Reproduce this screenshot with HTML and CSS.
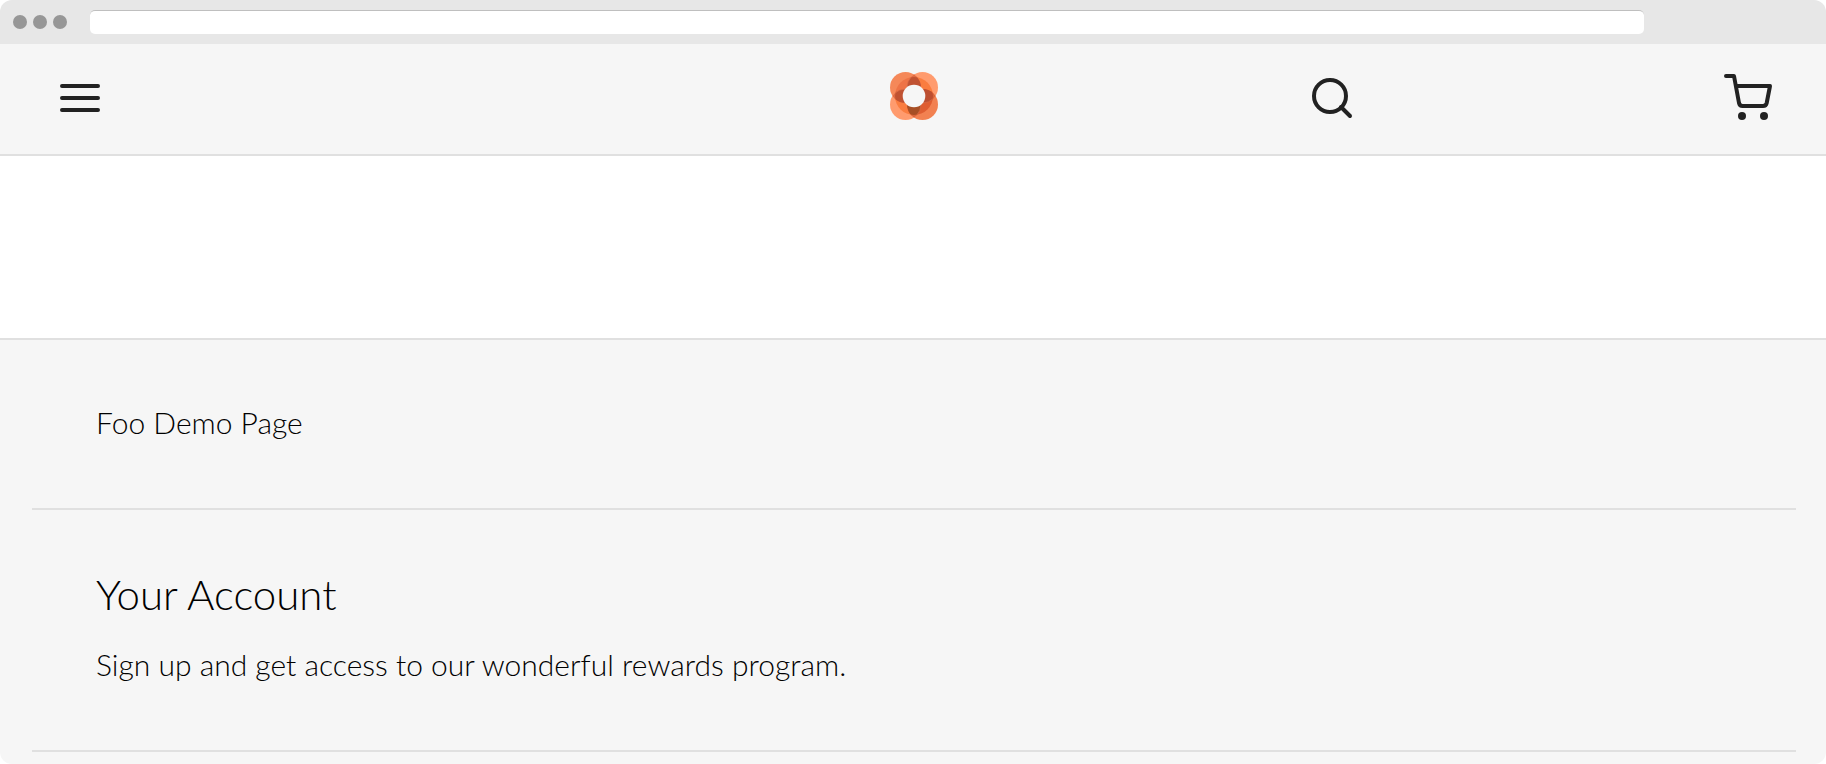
FILE: index.html
```html
<!DOCTYPE html>
<html lang="en">
<head>
<meta charset="utf-8">
<title>Foo Demo Page</title>
<link rel="stylesheet" href="styles.css">
</head>
<body>
<div class="browser">
  <div class="titlebar">
    <div class="dots"><span class="dot"></span><span class="dot"></span><span class="dot"></span></div>
    <input class="address" type="text" aria-label="Address">
  </div>
  <header class="header">
    <button class="icon-button" type="button" aria-label="Menu">
      <svg width="48" height="48" viewBox="0 0 48 48" fill="none" stroke="#222" stroke-width="4" stroke-linecap="round"><path d="M6 14h36M6 26h36M6 38h36"/></svg>
    </button>
    <a class="logo" href="#" aria-label="Home">
      <svg width="48" height="48" viewBox="0 0 48 48">
        <defs>
          <clipPath id="ring"><circle cx="24" cy="24" r="19"/></clipPath>
          <clipPath id="tl"><circle cx="15.5" cy="15.5" r="15.5"/></clipPath>
          <clipPath id="br"><circle cx="32.5" cy="32.5" r="15.5"/></clipPath>
        </defs>
        <circle cx="15.5" cy="15.5" r="15.5" fill="#f58859"/>
        <circle cx="32.5" cy="15.5" r="15.5" fill="#ff9b6e"/>
        <circle cx="15.5" cy="32.5" r="15.5" fill="#ff9b6e"/>
        <circle cx="32.5" cy="32.5" r="15.5" fill="#f28151"/>
        <g clip-path="url(#tl)"><circle cx="32.5" cy="15.5" r="15.5" fill="#df6b43"/><circle cx="15.5" cy="32.5" r="15.5" fill="#df6b43"/></g>
        <g clip-path="url(#br)"><circle cx="32.5" cy="15.5" r="15.5" fill="#d8653b"/><circle cx="15.5" cy="32.5" r="15.5" fill="#d8653b"/></g>
        <g clip-path="url(#ring)">
          <circle cx="15.5" cy="15.5" r="15.5" fill="#ee7346"/>
          <circle cx="32.5" cy="15.5" r="15.5" fill="#fa7d40"/>
          <circle cx="15.5" cy="32.5" r="15.5" fill="#fa7d40"/>
          <circle cx="32.5" cy="32.5" r="15.5" fill="#df5d31"/>
          <g stroke="#dc7450" stroke-width=".6">
            <g clip-path="url(#tl)"><circle cx="32.5" cy="15.5" r="15.5" fill="#c05232"/><circle cx="15.5" cy="32.5" r="15.5" fill="#c05232"/></g>
            <g clip-path="url(#br)"><circle cx="32.5" cy="15.5" r="15.5" fill="#bd4f31"/><circle cx="15.5" cy="32.5" r="15.5" fill="#a74f25"/></g>
          </g>
        </g>
        <circle cx="24" cy="24" r="11.3" fill="#f6f6f6"/>
      </svg>
    </a>
    <div class="actions">
      <button class="icon-button" type="button" aria-label="Search">
        <svg width="48" height="48" viewBox="0 0 48 48" fill="none" stroke="#222" stroke-width="4" stroke-linecap="round"><circle cx="23" cy="24" r="16"/><path d="M34 35l9 9"/></svg>
      </button>
      <button class="icon-button" type="button" aria-label="Cart">
        <svg width="48" height="48" viewBox="0 0 48 48" fill="none" stroke="#222" stroke-width="4" stroke-linecap="round" stroke-linejoin="round"><path d="M2 4h8l5 27q.7 3 3.500 3H39q3 0 3.700-3L46 14H12"/><g fill="#222" stroke="none"><circle cx="18" cy="44" r="4"/><circle cx="40" cy="44" r="4"/></g></svg>
      </button>
    </div>
  </header>
  <main class="content"></main>
  <footer class="footer">
    <section class="block"><p class="text">Foo Demo Page</p></section>
    <section class="block">
      <h2 class="heading">Your Account</h2>
      <p class="text">Sign up and get access to our wonderful rewards program.</p>
    </section>
  </footer>
</div>
</body>
</html>
```
FILE: styles.css
```css
* { box-sizing: border-box; }
body { margin: 0; background: #fff; color: #000; font-family: Lato, "Open Sans", sans-serif; font-weight: 300; }
.browser { display: flex; flex-direction: column; min-height: 100vh; border-radius: 12px; overflow: hidden; background: #fff; }
.titlebar { display: flex; align-items: center; gap: 23px; height: 44px; padding: 0 182px 0 13px; background: #e7e7e7; }
.dots { display: flex; gap: 6px; }
.dot { width: 14px; height: 14px; border-radius: 50%; background: #979797; }
.address { flex: 1; height: 24px; padding: 0 8px; border: 0; border-top: 1px solid #bfbfbf; border-radius: 5px; background: #fff; }
.header { display: grid; grid-template-columns: 1fr 48px 1fr; align-items: center; padding: 28px 54px 34px 56px; background: #f6f6f6; border-bottom: 2px solid #e0e0e0; }
.icon-button { display: block; padding: 0; border: 0; background: none; justify-self: start; }
.icon-button svg, .logo svg { display: block; overflow: visible; }
.actions { display: grid; grid-template-columns: 1fr 1fr; }
.actions .icon-button { justify-self: end; }
.content { min-height: 182px; }
.footer { flex: 1; padding: 0 30px 0 32px; background: #f6f6f6; border-top: 2px solid #e0e0e0; }
.block { padding: 62px 64px 66px; border-bottom: 2px solid #e0e0e0; }
.heading { margin: 0 0 28px; font-size: 42px; line-height: 44px; font-weight: 300; }
.text { margin: 0; font-size: 30px; line-height: 40px; }
```
